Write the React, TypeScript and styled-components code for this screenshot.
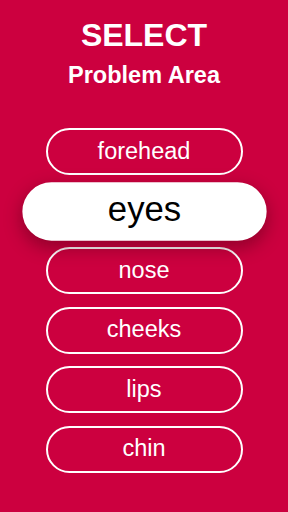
import React, { useState } from 'react'
import styled, { createGlobalStyle } from 'styled-components';

const areas = ['forehead', 'eyes', 'nose', 'cheeks', 'lips', 'chin'];

const App = () => {

  // which area is picked, eyes by default
  const [selected, setSelected] = useState('eyes');

  return (
    <>
      <GlobalStyle />
      <Screen>
        <Title>SELECT</Title>
        <Subtitle>Problem Area</Subtitle>
        <List>
          {areas.map((area) => (
            <Option
              key={area}
              $active={area === selected}
              onClick={() => setSelected(area)}
            >
              {area}
            </Option>
          ))}
        </List>
      </Screen>
    </>
  )
}

export default App;

const GlobalStyle = createGlobalStyle`
  html, body {
    margin: 0;
    padding: 0;
    background-color: #cc003f;
  }
  * {
    box-sizing: border-box;
  }
`;

const Screen = styled.div`
    width: 288px;
    height: 512px;
    overflow: hidden;
    background-color: #cc003f;
    display: flex;
    flex-direction: column;
    align-items: center;
    padding-top: 19px;
    font-family: "Liberation Sans", Arial, sans-serif;
    color: white;
`;

const Title = styled.h1`
    margin: 0;
    font-size: 32px;
    line-height: 32px;
    font-weight: bold;
`;

const Subtitle = styled.h2`
    margin: 13px 0 0 0;
    font-size: 23.5px;
    line-height: 23px;
    font-weight: bold;
`;

const List = styled.div`
    margin-top: 41px;
    display: flex;
    flex-direction: column;
    align-items: center;
    gap: 12.5px;
`;

const Option = styled.button<{ $active: boolean }>`
    width: 197px;
    height: 47px;
    border-radius: 24px;
    border: 2px solid white;
    display: flex;
    align-items: center;
    justify-content: center;
    font-family: inherit;
    font-size: ${(p) => (p.$active ? '28px' : '23.5px')};
    line-height: 1;
    padding: ${(p) => (p.$active ? '0 0 3px 0' : '0')};
    cursor: pointer;
    color: ${(p) => (p.$active ? 'black' : 'white')};
    background-color: ${(p) => (p.$active ? 'white' : 'transparent')};
    transform: ${(p) => (p.$active ? 'scale(1.24)' : 'none')};
    box-shadow: ${(p) => (p.$active ? '0 5px 14px 1px rgba(60, 0, 15, 0.4)' : 'none')};
    position: relative;
    z-index: ${(p) => (p.$active ? 1 : 0)};
`;
